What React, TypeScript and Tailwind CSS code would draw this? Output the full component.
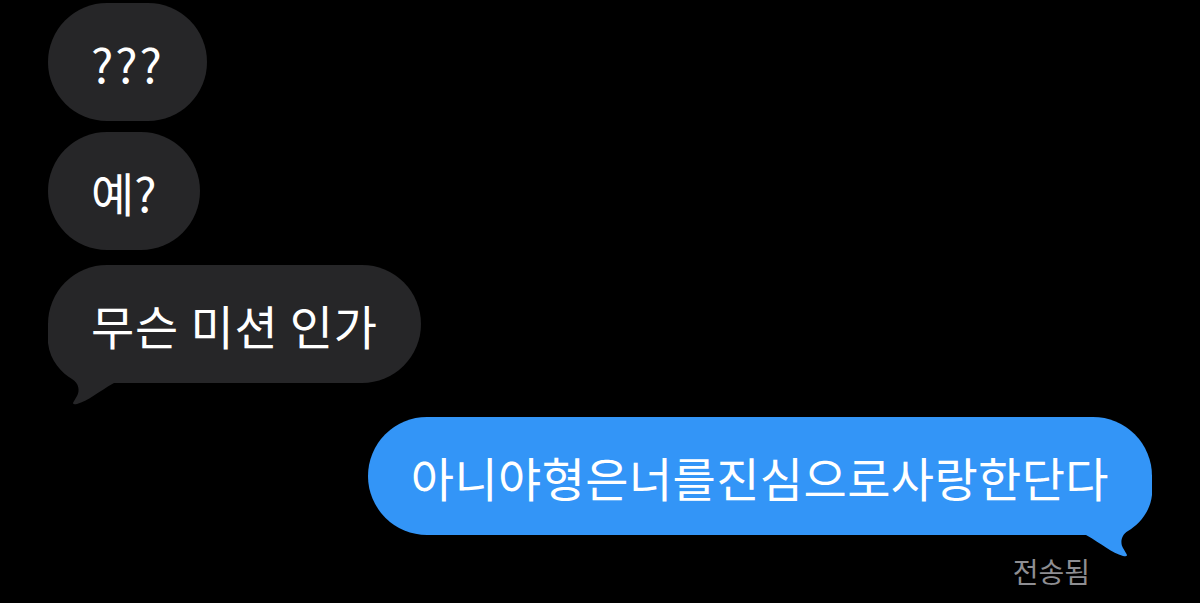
const font = { fontFamily: '"Noto Sans CJK KR", "Noto Sans", sans-serif' }

function Tail({ color, side }: { color: string; side: 'left' | 'right' }) {
  // drawn relative to the bubble's bottom corner, tip hanging below it
  return (
    <svg
      width="70"
      height="84"
      viewBox="0 -60 70 84"
      className={
        side === 'left'
          ? 'absolute left-0 bottom-[-24px]'
          : 'absolute right-0 bottom-[-24px] -scale-x-100'
      }
    >
      <path
        d="M0 -60 L0 -40 C2 -22 14 -10 24 -4 C31 0 32 8 29 13 Q26 18 25 20 Q25 22 29 21 C40 18 50 9 66 0 L66 -60 Z"
        fill={color}
      />
    </svg>
  )
}

function Bubble({
  text,
  tail,
  blue,
  extra = '',
}: {
  text: string
  tail?: boolean
  blue?: boolean
  extra?: string
}) {
  const color = blue ? '#3395f7' : '#262628'
  return (
    <div
      className={
        'relative flex h-[118px] items-center rounded-full px-[43px] text-[47px] leading-none text-white ' +
        (blue ? 'bg-[#3395f7] ' : 'bg-[#262628] ') +
        extra
      }
    >
      {tail && <Tail color={color} side={blue ? 'right' : 'left'} />}
      <span className="relative whitespace-pre">{text}</span>
    </div>
  )
}

export default function App() {
  return (
    <div className="h-[603px] w-[1200px] overflow-hidden bg-black" style={font}>
      <div className="flex flex-col items-start pl-[48px] pt-[3px]">
        <Bubble text="???" extra="tracking-[2px]" />
        <div className="mt-[11px]">
          <Bubble text="예?" />
        </div>
        <div className="mt-[15px]">
          <Bubble text="무슨 미션 인가" tail extra="tracking-[0.8px]" />
        </div>
      </div>

      <div className="mt-[34px] flex flex-col items-end pr-[48px]">
        <Bubble text="아니야형은너를진심으로사랑한단다" tail blue extra="tracking-[0.4px]" />
        <div className="mr-[62px] mt-[22px] text-[28px] leading-none text-[#8e8e92]">전송됨</div>
      </div>
    </div>
  )
}
